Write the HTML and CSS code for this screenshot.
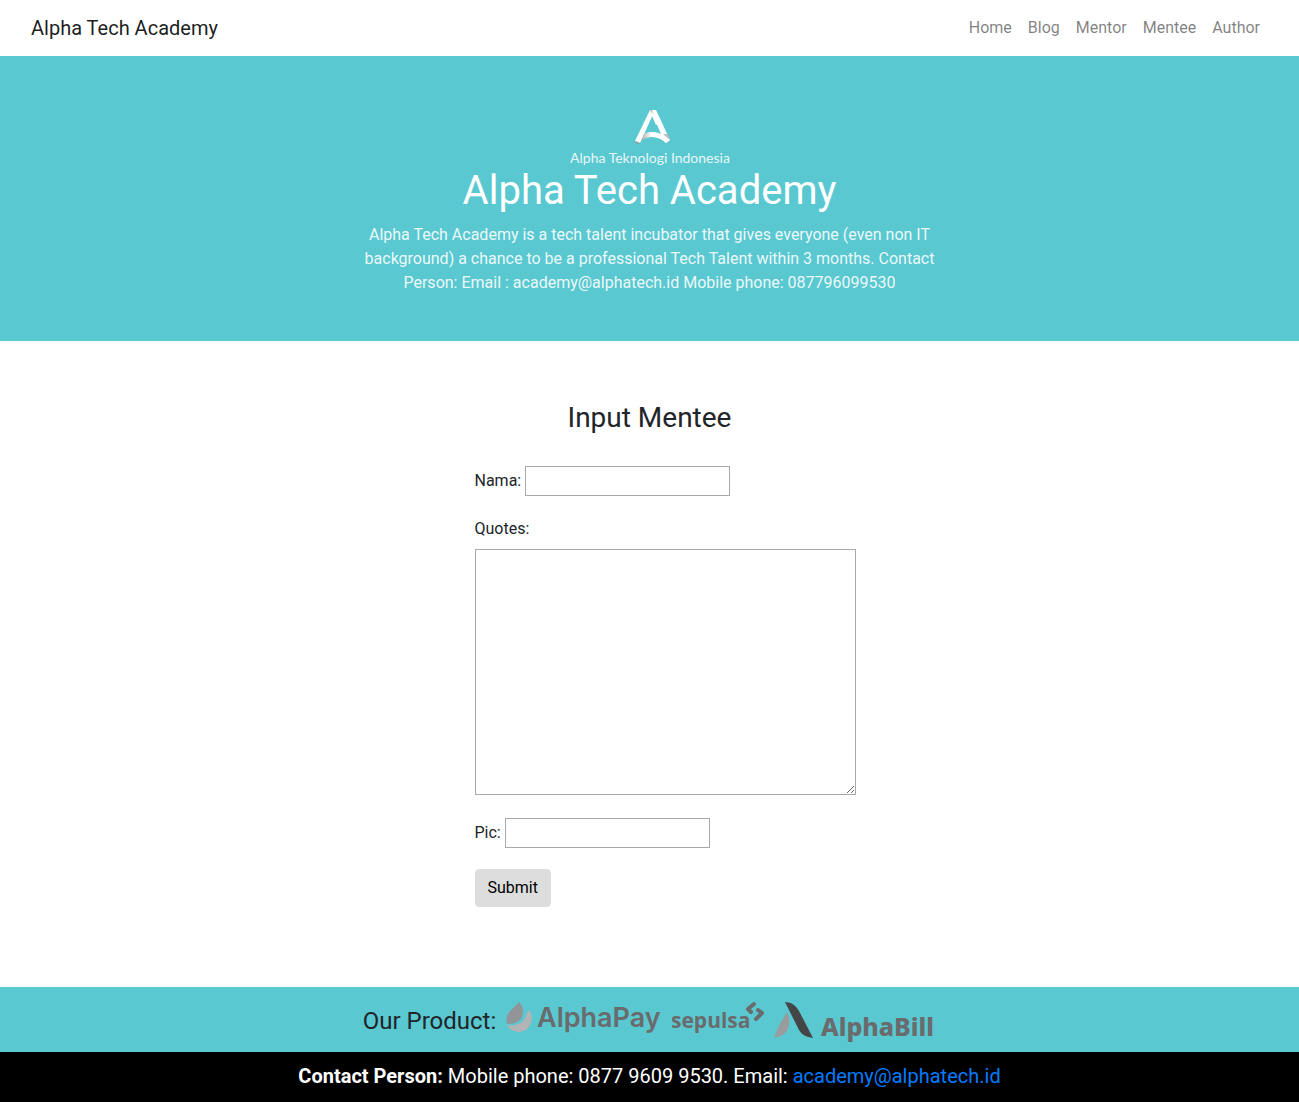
FILE: index.html
```html
<!DOCTYPE html>
<html lang="en">
<head>
<meta charset="utf-8">
<meta name="viewport" content="width=device-width, initial-scale=1">
<title>Alpha Tech Academy</title>
<link rel="stylesheet" href="styles.css">
</head>
<body>
<header class="navbar">
  <a class="brand" href="#">Alpha Tech Academy</a>
  <nav class="nav">
    <a href="#">Home</a>
    <a href="#">Blog</a>
    <a href="#">Mentor</a>
    <a href="#">Mentee</a>
    <a href="#">Author</a>
  </nav>
</header>

<section class="hero">
  <svg class="hero-logo" width="164" height="63" viewBox="0 0 164 63" role="img" aria-label="Alpha Teknologi Indonesia">
    <defs>
      <linearGradient id="arch" x1="0" y1="0" x2="1" y2="0">
        <stop offset="0" stop-color="#aaa"/>
        <stop offset=".35" stop-color="#fff"/>
      </linearGradient>
      <linearGradient id="stem" x1="0" y1="0" x2="0" y2="1">
        <stop offset="0" stop-color="#bbb"/>
        <stop offset=".3" stop-color="#fff"/>
      </linearGradient>
    </defs>
    <path d="M82 6h5L72 39l-5-2z" fill="#fff"/>
    <path d="M67 37l5 2-3 1z" fill="#999"/>
    <path d="M83 6h5l14 30-4 3-3-4z" fill="#fff"/>
    <path d="M82 6h2l6 14-2 1-4-9z" fill="url(#stem)"/>
    <path d="M73 37l3-7c7-4 17-2 26 6l-4 3c-8-7-17-8-25-2z" fill="url(#arch)"/>
    <path d="M95 30l7 6-2-6z" fill="#bbb"/>
    <text class="hero-logo-text" x="82" y="59" text-anchor="middle">Alpha Teknologi Indonesia</text>
  </svg>
  <h1>Alpha Tech Academy</h1>
  <p>Alpha Tech Academy is a tech talent incubator that gives everyone (even non IT background) a chance to be a professional Tech Talent within 3 months. Contact Person: Email : academy@alphatech.id Mobile phone: 087796099530</p>
</section>

<main class="content">
  <h2>Input Mentee</h2>
  <form class="mentee-form">
    <div class="field">
      <label for="nama">Nama:</label>
      <input type="text" id="nama" name="nama">
    </div>
    <div class="field field-stacked">
      <label for="quotes">Quotes:</label>
      <textarea id="quotes" name="quotes"></textarea>
    </div>
    <div class="field">
      <label for="pic">Pic:</label>
      <input type="text" id="pic" name="pic">
    </div>
    <button type="submit">Submit</button>
  </form>
</main>

<section class="products">
  <span class="products-title">Our Product:</span>
  <svg width="156" height="45" viewBox="0 0 156 45" role="img" aria-label="AlphaPay">
    <path d="M23 13C27 18 26 24 24 28 21 33 17 35 12 35 7 34 3 32 1 28 9 29 15 27 18 23 20 20 20 16 23 13z" fill="#b2b4b6"/>
    <path d="M13 5C17 9 18 15 16 20 14 25 8 27 1 27 0 22 1 17 5 13 8 10 11 8 13 5z" fill="#929497"/>
    <text class="mark mark-pay" x="31" y="30">AlphaPay</text>
  </svg>
  <svg width="92" height="45" viewBox="0 0 92 45" role="img" aria-label="sepulsa">
    <text class="mark mark-sepulsa" x="-1" y="31">sepulsa</text>
    <path d="M82 7 76 12 79 15M86 13 90 16 84 22" fill="none" stroke="#6a6b6d" stroke-width="4" stroke-linecap="round" stroke-linejoin="round"/>
  </svg>
  <svg width="162" height="45" viewBox="0 0 162 45" role="img" aria-label="AlphaBill">
    <path d="M13 15C16 21 16 28 13 34 10 38 5 40 0 41 3 32 8 23 13 15z" fill="#999b9d"/>
    <path d="M11 5C18 5 22 9 25 14L39 41C32 40 28 38 25 33z" fill="#444546"/>
    <text class="mark mark-bill" x="47" y="39">AlphaBill</text>
  </svg>
</section>

<footer class="contact">
  <strong>Contact Person:</strong> Mobile phone: 0877 9609 9530. Email: <a href="mailto:academy@alphatech.id">academy@alphatech.id</a>
</footer>
</body>
</html>
```
FILE: styles.css
```css
* {
  box-sizing: border-box;
}

body {
  margin: 0;
  min-height: 100vh;
  display: flex;
  flex-direction: column;
  font: 16px/24px Roboto, sans-serif;
  color: #212529;
  background: #fff;
}

h1,
h2,
p {
  margin: 0;
  font-weight: 400;
}

a {
  text-decoration: none;
}

.navbar {
  display: flex;
  flex-wrap: wrap;
  align-items: center;
  justify-content: space-between;
  padding: 8px 31px;
}

.brand {
  padding: 5px 0;
  font-size: 20px;
  line-height: 30px;
  color: rgba(0, 0, 0, .9);
}

.nav {
  display: flex;
}

.nav a {
  padding: 8px;
  color: rgba(0, 0, 0, .5);
}

.hero {
  display: flex;
  flex-direction: column;
  align-items: center;
  padding: 48px 16px 46px;
  text-align: center;
  color: #fff;
  background: #5ac8d0;
}

.hero-logo {
  display: block;
}

.hero-logo-text {
  font: 14px Lato, sans-serif;
  fill: #e6f7f8;
}

.hero h1 {
  margin-bottom: 8px;
  font-size: 40px;
  line-height: 48px;
}

.hero p {
  max-width: 600px;
  color: rgba(255, 255, 255, .9);
}

.content {
  flex: 1;
  padding: 60px 16px 80px;
}

.content h2 {
  margin-bottom: 31px;
  font-size: 28px;
  line-height: 34px;
  text-align: center;
}

.mentee-form {
  max-width: 350px;
  margin: 0 auto;
}

.field {
  display: flex;
  align-items: center;
  gap: 4px;
  margin-bottom: 21px;
}

.field-stacked {
  flex-direction: column;
  align-items: flex-start;
  gap: 8px;
  margin-bottom: 23px;
}

input,
textarea {
  margin: 0;
  padding: 2px;
  border: 1px solid #a9a9a9;
  border-radius: 0;
  font: inherit;
  color: inherit;
  background: #fff;
}

input {
  width: 205px;
  height: 30px;
}

textarea {
  width: 381px;
  height: 246px;
}

button {
  display: block;
  padding: 6px 12px;
  border: 1px solid #ddd;
  border-radius: 4px;
  font: inherit;
  color: #000;
  background: #ddd;
}

.products {
  display: flex;
  flex-wrap: wrap;
  align-items: center;
  justify-content: center;
  gap: 10px;
  padding: 10px 16px;
  background: #5ac8d0;
}

.products-title {
  padding-top: 4px;
  font-size: 24px;
  line-height: 41px;
}

.mark {
  fill: #6a6b6d;
}

.mark-pay {
  font: 600 27px Inter, sans-serif;
}

.mark-sepulsa {
  font: 700 21px "Open Sans", sans-serif;
}

.mark-bill {
  font: 800 25px "Noto Sans", sans-serif;
}

.contact {
  padding: 9px 16px 11px;
  font-size: 20px;
  line-height: 30px;
  text-align: center;
  color: #fff;
  background: #000;
}

.contact a {
  color: #007bff;
}
```
